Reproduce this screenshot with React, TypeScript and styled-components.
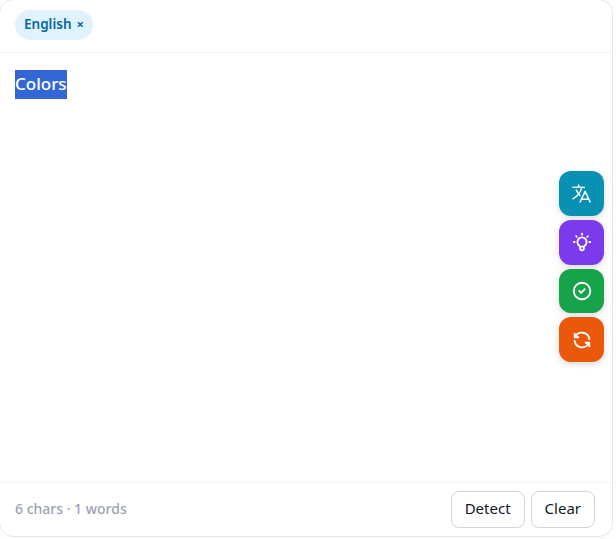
import { createGlobalStyle } from 'styled-components';
import styled from 'styled-components';
import { TbBulb, TbCircleCheck, TbRefresh } from 'react-icons/tb';
import { HiOutlineLanguage } from 'react-icons/hi2';

const GlobalStyle = createGlobalStyle`
  html, body {
    margin: 0;
    background: #fdfdfe;
  }
  body {
    font-family: "Noto Sans", "Open Sans", sans-serif;
  }
`;

const actions = [
  { id: 'translate', color: '#0891b2', icon: <HiOutlineLanguage size={23} /> },
  { id: 'explain', color: '#7c3aed', icon: <TbBulb size={22} /> },
  { id: 'check', color: '#16a34a', icon: <TbCircleCheck size={22} /> },
  { id: 'rewrite', color: '#ea580c', icon: <TbRefresh size={22} /> },
];

const App = () => {
  return (
    <>
      <GlobalStyle />
      <Page>
        <Card>
          <Header>
            <LangChip>
              English <span className="close">×</span>
            </LangChip>
          </Header>
          <Body>
            <Selected>Colors</Selected>
            <ActionRail>
              {actions.map((a) => (
                <ActionButton key={a.id} $color={a.color}>
                  {a.icon}
                </ActionButton>
              ))}
            </ActionRail>
          </Body>
          <Footer>
            <Stats>6 chars · 1 words</Stats>
            <Buttons>
              <PlainButton>Detect</PlainButton>
              <PlainButton>Clear</PlainButton>
            </Buttons>
          </Footer>
        </Card>
      </Page>
    </>
  );
};

const Page = styled.div`
  width: 616px;
  height: 539px;
  overflow: hidden;
`;

const Card = styled.div`
  box-sizing: border-box;
  width: 614px;
  height: 538px;
  margin: -1px 0 0 -1px;
  display: flex;
  flex-direction: column;
  background: #fff;
  border: 1px solid #e5e7eb;
  border-radius: 14px;
  overflow: hidden;
`;

const Header = styled.div`
  box-sizing: border-box;
  height: 53px;
  display: flex;
  align-items: flex-start;
  padding: 10px 15px 0;
  border-bottom: 1px solid #f3f4f6;
`;

const LangChip = styled.div`
  box-sizing: border-box;
  height: 30px;
  display: flex;
  align-items: center;
  gap: 5px;
  padding: 0 9px 2px;
  border-radius: 15px;
  background: #e0f2fe;
  color: #0369a1;
  font-size: 13.5px;
  font-weight: 600;

  .close {
    font-size: 13px;
    font-weight: 700;
  }
`;

const Body = styled.div`
  position: relative;
  flex: 1;
  padding: 17px 15px;
  font-size: 17px;
  font-weight: 500;
  line-height: 27px;
  color: #111827;
`;

const Selected = styled.span`
  display: inline-block;
  width: 52px;
  padding-bottom: 2px;
  background: #3367d6;
  color: #fff;
`;

const ActionRail = styled.div`
  position: absolute;
  right: 8px;
  top: 118.4px;
  display: flex;
  flex-direction: column;
  gap: 4px;
`;

const ActionButton = styled.button<{ $color: string }>`
  width: 45px;
  height: 44.67px;
  display: flex;
  align-items: center;
  justify-content: center;
  padding: 0;
  border: none;
  border-radius: 12px;
  background: ${(p) => p.$color};
  color: #fff;
  box-shadow: 0 2px 6px rgba(0, 0, 0, 0.15);
`;

const Footer = styled.div`
  box-sizing: border-box;
  height: 54px;
  display: flex;
  align-items: center;
  justify-content: space-between;
  padding: 0 17px 0 15px;
  border-top: 1px solid #f3f4f6;
`;

const Stats = styled.span`
  padding-bottom: 2px;
  font-size: 14px;
  font-weight: 500;
  color: #9ca3af;
`;

const Buttons = styled.div`
  display: flex;
  gap: 6px;
`;

const PlainButton = styled.button`
  box-sizing: border-box;
  height: 37px;
  padding: 0 13px 3px;
  font-family: inherit;
  font-size: 15px;
  color: #111827;
  background: #fff;
  border: 1px solid #d1d5db;
  border-radius: 8px;
`;

export default App;
